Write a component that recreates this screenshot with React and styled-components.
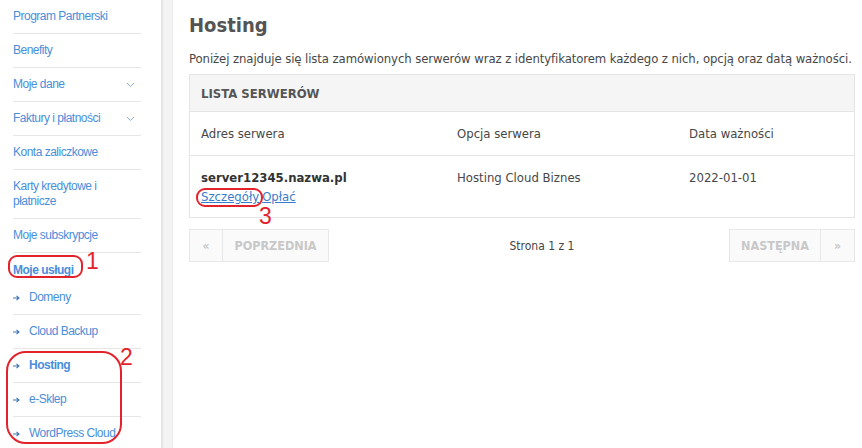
import styled, { createGlobalStyle } from "styled-components";

const Global = createGlobalStyle`
	html, body {
		margin: 0;
		padding: 0;
		background: #fff;
	}
	body {
		font-family: "DejaVu Sans Condensed", "DejaVu Sans", Verdana, sans-serif;
	}
`

const Page = styled.div`
	position: relative;
	display: flex;
	width: 862px;
	height: 448px;
	overflow: hidden;
	background: #fff;
`

const Sidebar = styled.nav`
	width: 128px;
	padding-left: 13px;
	flex-shrink: 0;
	font-family: "Liberation Sans", Arial, sans-serif;
	font-size: 12px;
`

const NavItem = styled.div`
	display: flex;
	align-items: center;
	justify-content: space-between;
	padding: ${p => p.$pad || "9px 0"};
	line-height: 15px;
	min-height: 15px;
	border-bottom: ${p => (p.$noline ? "none" : "1px solid #e6e6e6")};
	color: #4a8edb;
	font-weight: ${p => (p.$active ? "bold" : "normal")};
	letter-spacing: -0.5px;
`

const SubLabel = styled.span`
	display: flex;
	align-items: center;
	gap: 9px;
`

const Arrow = () => (
	<svg width="7" height="6" viewBox="0 0 7 6">
		<path d="M0 3 H6 M3.5 0.8 L6 3 L3.5 5.2" fill="none" stroke="#3e74b8" strokeWidth="1.1" />
	</svg>
)

const Chevron = () => (
	<svg width="9" height="6" viewBox="0 0 9 6" style={{ marginRight: 6 }}>
		<path d="M1 1 L4.5 4.5 L8 1" fill="none" stroke="#8aaedc" strokeWidth="1" />
	</svg>
)

const Strip = styled.div`
	width: 9px;
	margin-left: 20px;
	flex-shrink: 0;
	background: #f3f3f3;
	border-left: 2px solid #e4e4e4;
	border-right: 1px solid #ececec;
`

const Main = styled.main`
	flex: 1;
	padding: 0 7px 0 16px;
	color: #474747;
`

const Title = styled.h1`
	margin: 12px 0 0;
	font-size: 20px;
	line-height: 26px;
	font-weight: bold;
	color: #545454;
`

const Lead = styled.p`
	margin: 13px 0 0;
	font-size: 13px;
	line-height: 16px;
	letter-spacing: -0.09px;
	color: #474747;
	white-space: nowrap;
`

const Box = styled.section`
	margin-top: 7px;
	border: 1px solid #e5e5e5;
`

const BoxHead = styled.div`
	height: 36px;
	display: flex;
	align-items: center;
	padding-left: 11px;
	background: #f5f5f5;
	border-bottom: 1px solid #e5e5e5;
	font-size: 13px;
	font-weight: bold;
	color: #555;
`

const Row = styled.div`
	display: grid;
	grid-template-columns: 256px 232px 1fr;
	padding-left: 11px;
	height: ${p => p.$h};
	align-items: ${p => (p.$top ? "start" : "center")};
	padding-top: ${p => (p.$top ? "14px" : "0")};
	box-sizing: border-box;
	border-bottom: ${p => (p.$line ? "1px solid #e5e5e5" : "none")};
	font-size: 13px;
	color: #474747;
`

const Server = styled.div`
	font-weight: bold;
	color: #333;
	line-height: 16px;
`

const Links = styled.div`
	margin-top: 3px;
	font-size: 13px;
	line-height: 16px;
	a {
		color: #3b7dcc;
		text-decoration: underline;
		margin-right: 3px;
	}
`

const Pager = styled.div`
	margin-top: 11px;
	display: flex;
	align-items: center;
	justify-content: space-between;
`

const PagerGroup = styled.div`
	display: flex;
`

const PageBtn = styled.div`
	height: 31px;
	width: ${p => p.$w};
	display: flex;
	align-items: center;
	justify-content: center;
	background: #fafafa;
	border: 1px solid #e8e8e8;
	margin-left: ${p => (p.$join ? "-1px" : "0")};
	color: #c8c8c8;
	font-size: ${p => (p.$icon ? "12px" : "12.5px")};
	font-weight: bold;
`

const PageInfo = styled.div`
	font-size: 12px;
	color: #444;
	margin-left: 26px;
`

const Mark = styled.div`
	position: absolute;
	left: ${p => p.$x}px;
	top: ${p => p.$y}px;
	width: ${p => p.$w}px;
	height: ${p => p.$h}px;
	border: 2px solid #e3232c;
	border-radius: ${p => p.$r}px;
	box-sizing: border-box;
	pointer-events: none;
`

const Num = styled.div`
	position: absolute;
	left: ${p => p.$x}px;
	top: ${p => p.$y}px;
	font-family: "Liberation Sans", Arial, sans-serif;
	font-size: 23px;
	line-height: 23px;
	color: #e3232c;
`

const menu = [
	{ label: "Program Partnerski" },
	{ label: "Benefity" },
	{ label: "Moje dane", more: true },
	{ label: "Faktury i płatności", more: true },
	{ label: "Konta zaliczkowe" },
	{ label: "Karty kredytowe i płatnicze" },
	{ label: "Moje subskrypcje" },
]

const services = ["Domeny", "Cloud Backup", "Hosting", "e-Sklep", "WordPress Cloud"]

const App = () => {
	return (
		<Page>
			<Global />
			<Sidebar>
				{menu.map(m => (
					<NavItem key={m.label}>
						<span style={m.label.startsWith("Karty") ? { maxWidth: 100 } : undefined}>{m.label}</span>
						{m.more && <Chevron />}
					</NavItem>
				))}
				<NavItem $active $noline $pad="10px 0 3px">Moje usługi</NavItem>
				{services.map(s => (
					<NavItem key={s} $active={s === "Hosting"}>
						<SubLabel><Arrow /><span>{s}</span></SubLabel>
					</NavItem>
				))}
			</Sidebar>
			<Strip />
			<Main>
				<Title>Hosting</Title>
				<Lead>Poniżej znajduje się lista zamówionych serwerów wraz z identyfikatorem każdego z nich, opcją oraz datą ważności.</Lead>
				<Box>
					<BoxHead>LISTA SERWERÓW</BoxHead>
					<Row $h="44px" $line>
						<div>Adres serwera</div>
						<div>Opcja serwera</div>
						<div>Data ważności</div>
					</Row>
					<Row $h="61px" $top>
						<div>
							<Server>server12345.nazwa.pl</Server>
							<Links><a>Szczegóły</a><a>Opłać</a></Links>
						</div>
						<div>Hosting Cloud Biznes</div>
						<div>2022-01-01</div>
					</Row>
				</Box>
				<Pager>
					<PagerGroup>
						<PageBtn $w="32px" $icon>«</PageBtn>
						<PageBtn $w="105px" $join>POPRZEDNIA</PageBtn>
					</PagerGroup>
					<PageInfo>Strona 1 z 1</PageInfo>
					<PagerGroup>
						<PageBtn $w="90px">NASTĘPNA</PageBtn>
						<PageBtn $w="33px" $join $icon>»</PageBtn>
					</PagerGroup>
				</Pager>
			</Main>
			<Mark $x={8} $y={255} $w={75} $h={23} $r={9} />
			<Num $x={86} $y={250}>1</Num>
			<Mark $x={6} $y={351} $w={116} $h={93} $r={20} />
			<Num $x={120} $y={346}>2</Num>
			<Mark $x={196} $y={188} $w={67} $h={19} $r={9} />
			<Num $x={259} $y={205}>3</Num>
		</Page>
	)
}

export default App;
